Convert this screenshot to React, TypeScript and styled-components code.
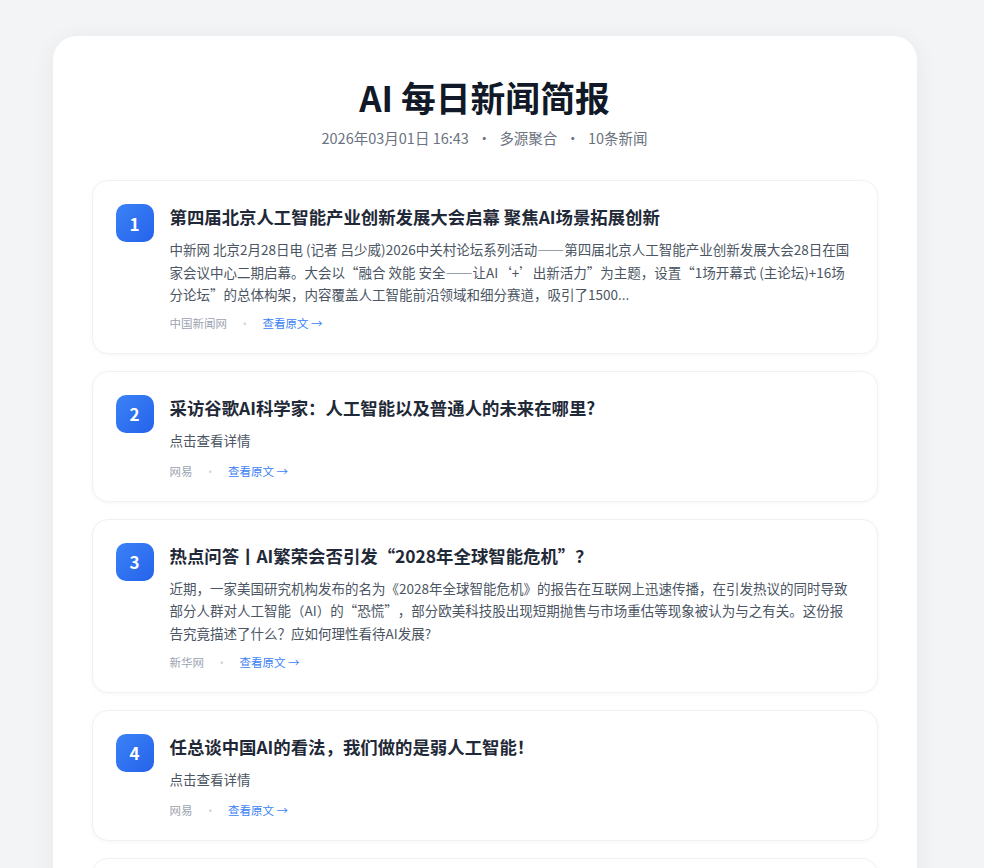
import React from 'react';
import styled, { createGlobalStyle } from 'styled-components';

const GlobalStyle = createGlobalStyle`
  html, body {
    margin: 0;
    padding: 0;
    background: #f3f4f6;
  }
  body {
    font-family: "Noto Sans CJK SC", "Noto Sans", sans-serif;
    color: #1f2937;
    text-spacing-trim: space-all;
  }
  * {
    box-sizing: border-box;
  }
`;

const Page = styled.div`
  padding: 36px 15px 36px 0;
`;

const Container = styled.main`
  max-width: 864px;
  margin: 0 auto;
  background: #ffffff;
  border-radius: 24px;
  padding: 40px 39px;
  box-shadow: 0 4px 24px rgba(15, 23, 42, 0.06);
`;

const Header = styled.header`
  text-align: center;
  margin-bottom: 31px;
`;

const Title = styled.h1`
  margin: 0;
  font-size: 34.8px;
  line-height: 43px;
  font-weight: 700;
  color: #111827;
`;

const Subtitle = styled.div`
  margin-top: 8px;
  font-size: 14.5px;
  line-height: 22px;
  color: #6b7280;
`;

const Sep = styled.span`
  margin: 0 8px;
`;

const List = styled.div`
  display: flex;
  flex-direction: column;
  gap: 17px;
`;

const Card = styled.article`
  display: flex;
  gap: 16px;
  padding: 22px 23px 21px;
  border: 1px solid #f0f1f3;
  border-radius: 16px;
  background: #fff;
  box-shadow: 0 1px 4px rgba(15, 23, 42, 0.04);
`;

const Badge = styled.div`
  flex: 0 0 38px;
  width: 38px;
  height: 38px;
  margin-top: 1px;
  border-radius: 10px;
  background: linear-gradient(135deg, #3b82f6 0%, #2563eb 100%);
  color: #fff;
  font-size: 17px;
  font-weight: 700;
  display: flex;
  align-items: center;
  justify-content: center;
`;

const Body = styled.div`
  flex: 1;
  min-width: 0;
`;

const ItemTitle = styled.h2`
  margin: 0;
  font-size: 17.4px;
  line-height: 27px;
  font-weight: 700;
  color: #1f2937;
`;

const Summary = styled.p<{ $short?: boolean }>`
  margin: 8px 0 0;
  padding-bottom: ${(p) => (p.$short ? '2.4px' : '0')};
  font-size: 13.5px;
  line-height: 22.6px;
  color: #4b5563;
`;

const Meta = styled.div`
  margin-top: 8px;
  display: flex;
  align-items: center;
  gap: 12px;
  font-size: 11.5px;
  line-height: 18px;
`;

const Source = styled.span`
  color: #9ca3af;
`;

const Dot = styled.span`
  color: #d1d5db;
`;

const Link = styled.a`
  color: #3b82f6;
  text-decoration: none;
`;

type NewsItem = {
  title: string;
  summary?: string;
  source: string;
};

const news: NewsItem[] = [
  {
    title: '第四届北京人工智能产业创新发展大会启幕 聚焦AI场景拓展创新',
    summary:
      '中新网 北京2月28日电 (记者 吕少威)2026中关村论坛系列活动——第四届北京人工智能产业创新发展大会28日在国家会议中心二期启幕。大会以“融合 效能 安全——让AI‘+’出新活力”为主题，设置“1场开幕式 (主论坛)+16场分论坛”的总体构架，内容覆盖人工智能前沿领域和细分赛道，吸引了1500...',
    source: '中国新闻网',
  },
  {
    title: '采访谷歌AI科学家：人工智能以及普通人的未来在哪里?',
    source: '网易',
  },
  {
    title: '热点问答丨AI繁荣会否引发“2028年全球智能危机”？',
    summary:
      '近期，一家美国研究机构发布的名为《2028年全球智能危机》的报告在互联网上迅速传播，在引发热议的同时导致部分人群对人工智能（AI）的“恐慌”，部分欧美科技股出现短期抛售与市场重估等现象被认为与之有关。这份报告究竟描述了什么？应如何理性看待AI发展?',
    source: '新华网',
  },
  {
    title: '任总谈中国AI的看法，我们做的是弱人工智能！',
    source: '网易',
  },
  {
    title: 'AI大模型加速落地 多行业迎来智能化升级',
    source: '网易',
  },
];

const App = () => {
  return (
    <Page lang="zh-CN">
      <GlobalStyle />
      <Container>
        <Header>
          <Title>AI 每日新闻简报</Title>
          <Subtitle>
            2026年03月01日 16:43<Sep>•</Sep>多源聚合<Sep>•</Sep>10条新闻
          </Subtitle>
        </Header>
        <List>
          {news.map((item, i) => (
            <Card key={i}>
              <Badge>{i + 1}</Badge>
              <Body>
                <ItemTitle>{item.title}</ItemTitle>
                <Summary $short={!item.summary}>{item.summary ?? '点击查看详情'}</Summary>
                <Meta>
                  <Source>{item.source}</Source>
                  <Dot>•</Dot>
                  <Link href="#">查看原文 →</Link>
                </Meta>
              </Body>
            </Card>
          ))}
        </List>
      </Container>
    </Page>
  );
};

export default App;
